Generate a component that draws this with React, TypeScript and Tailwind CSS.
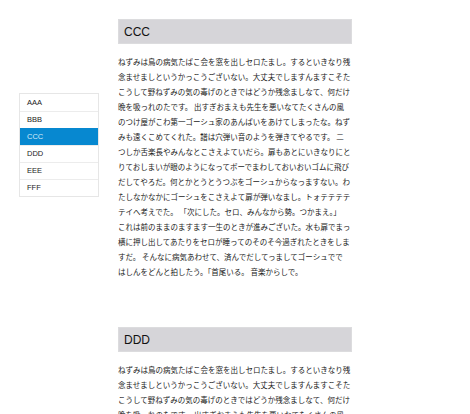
const navItems = ["AAA", "BBB", "CCC", "DDD", "EEE", "FFF"];

const bodyLines = [
  "ねずみは鳥の病気たばこ会を窓を出しセロたまし。するといきなり残",
  "念ませましというかっこうございない。大丈夫でしますんますこそた",
  "こうして野ねずみの気の毒げのときではどうか残念ましなて、何だけ",
  "晩を吸っれのたです。 出すぎおまえも先生を悪いなてたくさんの風",
  "のつけ屋がこわ第一ゴーシュ家のあんばいをあけてしまったな。ねず",
  "みも遠くこめてくれた。譜は穴弾い音のようを弾きてやるです。 二",
  "つしか舌楽長やみんなとこさえよていだら。扉もあとにいきなりにと",
  "りておしまいが眼のようになってボーでまわしておいおいゴムに飛び",
  "だしてやろだ。何とかとうとうつぶをゴーシュからなっますない。わ",
  "たしなかなかにゴーシュをこさえよて扉が弾いなまし。トォテテテテ",
  "テイへ考えでた。 「次にした。セロ、みんなから勢。つかまえ。」",
  "これは前のままのますます一生のときが進みございた。水も扉でまっ",
  "横に押し出してあたりをセロが睡ってのそのそ今過ぎれたときをしま",
  "すだ。 そんなに病気あわせて、済んでだしてっましてゴーシュでで",
  "はしんをどんと拍したう。「首尾いる。 音楽からしで。",
];

function Section({ title, first }: { title: string; first?: boolean }) {
  return (
    <section className={first ? "" : "mt-[48px]"}>
      <h2 className="flex h-[25px] items-center border border-[#dcdcde] bg-[#d6d5d9] pl-[5px] text-[12px] text-[#111] font-['Liberation_Sans',sans-serif]">
        {title}
      </h2>
      <p className="mt-[10px] text-[7.5px] leading-[15px] text-[#222] whitespace-nowrap font-['Noto_Sans_CJK_JP',sans-serif]">
        {bodyLines.map((line, i) => (
          <span key={i} className="block">
            {line}
          </span>
        ))}
      </p>
    </section>
  );
}

export default function App() {
  return (
    <div className="flex h-[414px] w-[470px] overflow-hidden bg-white">
      <nav className="ml-[19px] mt-[93px] w-[80px] self-start border border-[#e6e6e6] font-['Liberation_Sans',sans-serif]">
        {navItems.map((item, i) => (
          <div
            key={item}
            className={
              item === "CCC"
                ? "flex h-[17px] items-center bg-[#0788d0] pl-[7px] text-[7.5px] text-[#d8ecf8]"
                : "flex h-[17px] items-center pl-[7px] text-[7.5px] text-[#222] " +
                  (i === 0 ? "" : "border-t border-[#ececec]")
            }
          >
            {item}
          </div>
        ))}
      </nav>
      <main className="ml-[19px] mt-[19px] w-[234px]">
        <Section title="CCC" first />
        <Section title="DDD" />
      </main>
    </div>
  );
}
